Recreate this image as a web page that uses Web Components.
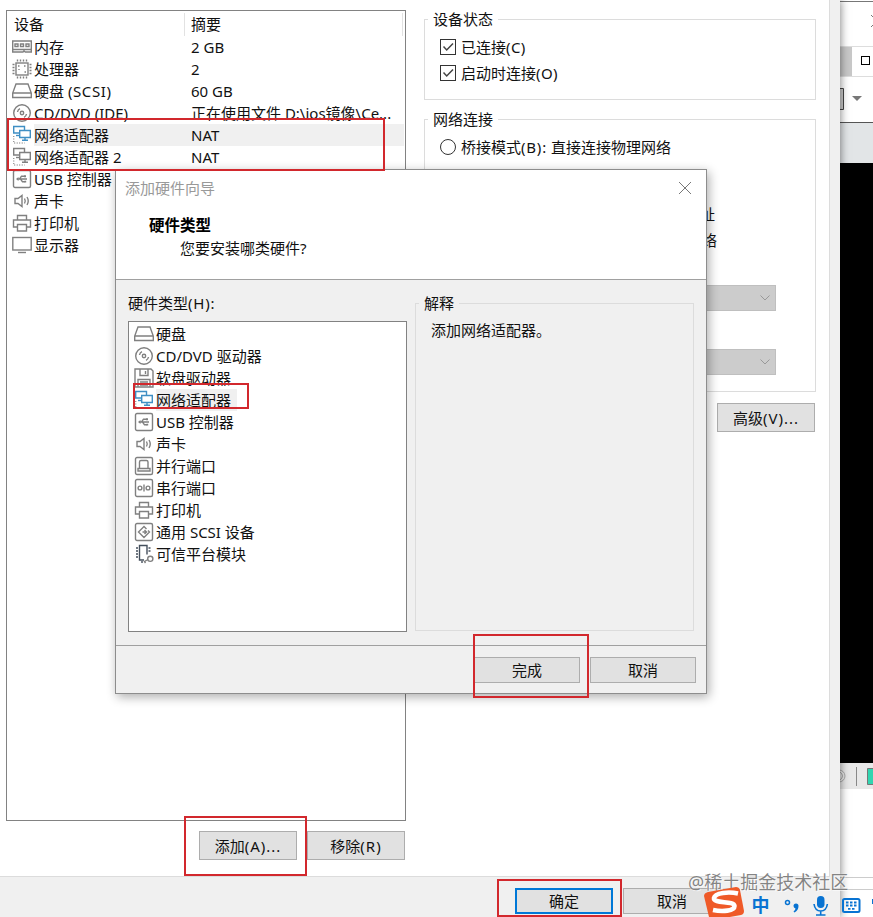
<!DOCTYPE html>
<html lang="zh-CN">
<head>
<meta charset="utf-8">
<title>虚拟机设置</title>
<style>
  html, body {
    margin: 0;
    width: 873px;
    height: 917px;
    overflow: hidden;
    background: #fff;
  }
  body {
    font-family: "Noto Sans", "Noto Sans CJK SC", sans-serif;
    font-size: 15px;
    line-height: 22px;
    color: #111;
  }
</style>
</head>
<body>
<vm-desktop></vm-desktop>

<script>
const ICONS = {
  memory: `<path d="M.7 4h18.600v11h-6l-1.300-1-1 1H.7zM.7 12.500h18.600"/><path d="M3 7h3v2.500H3zM8.500 7h3v2.500h-3zM14 7h3v2.500h-3z"/>`,
  cpu: `<rect x="4" y="4" width="12" height="12"/><path d="M5.500.500v2M8.500.500v2M11.500.500v2M14.500.500v2M5.500 17.500v2M8.500 17.500v2M11.500 17.500v2M14.500 17.500v2M.5 5.500h2M.5 8.500h2M.5 11.500h2M.5 14.500h2M17.500 5.500h2M17.500 8.500h2M17.500 11.500h2M17.500 14.500h2M6 7h1.500M12 7h1.500M12.500 13h1.500M7 10v1"/>`,
  disk: `<path d="M4 3h12l3.300 9v4.500H.7V12zM.7 12h18.600"/>`,
  cd: `<circle cx="10" cy="10" r="8.300"/><circle cx="10" cy="10" r="1.700"/><path d="M5.500 9a4.500 4.500 0 0 1 2.500-3.300M14.500 11a4.500 4.500 0 0 1-2.500 3.300"/>`,
  floppy: `<path d="M1 1h16l2 2v16H1zM6 1v6.500h8V1M11.500 3v3M4 19v-7.500h12V19M6 14h8M6 17h8"/>`,
  net: `<path d="M7.500 8H1.700V1.500h10.800v3.500"/><path d="M4 10.500h3.500"/><path d="M7.700 5.500h10.600v7H7.700zM13 12.500v2.500M10 15.200h6"/><path stroke="#999" stroke-dasharray="1 1.500" d="M1.700 11v7h11"/>`,
  usb: `<rect x="1.500" y="1.500" width="17" height="17" rx="1.500"/><path d="M5 10h10M7.500 10l2-2.800h3M8.500 10l2 2.800h2.500"/><path d="M6.500 8L4 10l2.500 2z" fill="#808080" stroke="none"/><path d="M12 6.200h2v2h-2zM12.500 11.800h1.700v1.700h-1.700z" fill="#808080" stroke="none"/>`,
  sound: `<path d="M3 7.500h3l4-3v11l-4-3H3zM12.500 7.500q1.500 2.500 0 5M15 6q2.500 4 0 8"/>`,
  printer: `<path d="M5.500 7V2.500h9V7M5.500 14h-4V7h17v7h-4M5.500 11.500h9V18h-9z"/>`,
  display: `<rect x=".8" y="2.500" width="18.400" height="12.500"/><path d="M6 17.500h8"/>`,
  parallel: `<rect x="1.500" y="1.500" width="17" height="17" rx="1.500"/><path d="M5.500 12.500V6q0-1.500 1.500-1.500h5.500q1.500 0 1.500 1.500v6.500M4 12.500h12v2.500H4z"/>`,
  serial: `<rect x="1.500" y="1.500" width="17" height="17" rx="1.500"/><circle cx="6" cy="10" r="1.900"/><circle cx="14" cy="10" r="1.900"/><path d="M10 6.500v7"/>`,
  scsi: `<rect x="1.500" y="1.500" width="17" height="17" rx="1.500"/><path d="M12.500 7L10 4.500 4.500 10l5.500 5.500 5.500-5.500-1.500-1.500M8.500 10h3.500M10.500 8l2 2-2 2"/>`,
  tpm: `<path d="M13 10.500V1.500H5.500V16H10M2 4h2M2 7h2M2 10h2M2 13h2M14.500 4h2M14.500 7h2M8 17v2" stroke="#444f5c"/><path d="M14 15.500l-3.500 2 1 1.500" /><circle cx="16.300" cy="14.800" r="2.600"/>`
};

const make = (tag, html) => {
  const template = document.createElement("template");
  template.innerHTML = html;
  window.customElements.define(tag, class extends HTMLElement {
    constructor() {
      super();
      this.attachShadow({ mode: "open" });
      this.shadowRoot.appendChild(template.content.cloneNode(true));
    }
  });
};

class DeviceIcon extends HTMLElement {
  connectedCallback() {
    if (!this.shadowRoot) this.attachShadow({ mode: "open" });
    const color = this.hasAttribute("active") ? "#3f8fc4" : "#808080";
    this.shadowRoot.innerHTML = `
      <style>
        :host { display: block; width: 20px; height: 20px; }
        svg { display: block; }
      </style>
      <svg width="20" height="20" viewBox="0 0 20 20" fill="none" stroke="${color}" stroke-width="1.400">
        ${ICONS[this.getAttribute("name")]}
      </svg>`;
  }
}
window.customElements.define("device-icon", DeviceIcon);

class DeviceRow extends HTMLElement {
  connectedCallback() {
    if (!this.shadowRoot) this.attachShadow({ mode: "open" });
    const active = this.hasAttribute("active") ? "active" : "";
    this.shadowRoot.innerHTML = `
      <style>
        :host { display: flex; height: 22px; align-items: center; white-space: nowrap; }
        device-icon { flex: none; margin-right: 2px; }
        .text { display: flex; height: 22px; line-height: 22px; }
        :host([selected]) .text { background: #f0f0f0; }
        .name { width: var(--name-width, auto); box-sizing: border-box; }
      </style>
      <device-icon name="${this.getAttribute("icon")}" ${active}></device-icon>
      <div class="text"><span class="name"><slot></slot></span><slot name="summary"></slot></div>`;
  }
}
window.customElements.define("device-row", DeviceRow);

make("push-button", `
  <style>
    :host {
      display: flex;
      box-sizing: border-box;
      align-items: center;
      justify-content: center;
      flex: none;
      background: #e1e1e1;
      border: 1px solid #adadad;
      white-space: nowrap;
    }
    :host([primary]) { border: 2px solid #0078d7; }
    ::slotted(span) { letter-spacing: 1px; }
  </style>
  <slot></slot>
`);

make("group-box", `
  <style>
    :host { display: block; box-sizing: border-box; border: 1px solid #dcdcdc; flex: none; }
    .legend {
      display: table;
      margin: -12px 0 0 3px;
      padding: 0 5px;
      height: 22px;
      background: var(--group-bg, #fff);
    }
  </style>
  <div class="legend"><slot name="legend"></slot></div>
  <slot></slot>
`);

make("check-item", `
  <style>
    :host { display: flex; align-items: center; height: 26px; white-space: nowrap; }
    .box {
      box-sizing: border-box;
      width: 16px;
      height: 16px;
      margin-right: 5px;
      border: 1px solid #333;
      background: #fff;
    }
    :host([radio]) .box { border-radius: 50%; }
    :host([radio]) svg { display: none; }
    svg { display: block; }
    ::slotted(span) { letter-spacing: .4px; }
  </style>
  <div class="box"><svg width="14" height="14" fill="none" stroke="#444" stroke-width="1.500"><path d="M2.500 6.500l3.200 3.500L12 3.500"/></svg></div>
  <slot></slot>
`);

make("combo-box", `
  <style>
    :host {
      display: flex;
      box-sizing: border-box;
      height: 26px;
      align-items: center;
      justify-content: flex-end;
      padding-right: 5px;
      background: #ccc;
      border: 1px solid #bfbfbf;
    }
  </style>
  <svg width="10" height="6" fill="none" stroke="#999"><path d="M.5.500l4.500 4.500L9.500.500"/></svg>
`);

make("device-list", `
  <style>
    :host {
      display: block;
      box-sizing: border-box;
      width: 400px;
      height: 811px;
      border: 1px solid #828282;
      --name-width: 157px;
    }
    .head { display: flex; height: 25px; padding-right: 2px; }
    .head div { box-sizing: border-box; border-right: 1px solid #e2e2e2; margin-top: 2px; height: 23px; line-height: 22px; }
    .head .a { width: 178px; padding-left: 7px; }
    .head .b { flex: 1; padding-left: 6px; }
    .rows { padding-left: 5px; }
    .fill { display: inline-block; width: 213px; }
    .wide { letter-spacing: .6px; }
  </style>
  <div class="head"><div class="a">设备</div><div class="b">摘要</div></div>
  <div class="rows">
    <device-row icon="memory">内存<span slot="summary">2 GB</span></device-row>
    <device-row icon="cpu">处理器<span slot="summary">2</span></device-row>
    <device-row icon="disk">硬盘 <span class="wide">(SCSI)</span><span slot="summary">60 GB</span></device-row>
    <device-row icon="cd">CD/DVD (IDE)<span slot="summary">正在使用文件 D:\\ios镜像\\Ce...</span></device-row>
    <device-row icon="net" active selected>网络适配器<span slot="summary" class="fill">NAT</span></device-row>
    <device-row icon="net">网络适配器 2<span slot="summary">NAT</span></device-row>
    <device-row icon="usb">USB 控制器</device-row>
    <device-row icon="sound">声卡</device-row>
    <device-row icon="printer">打印机</device-row>
    <device-row icon="display">显示器</device-row>
  </div>
`);

make("settings-window", `
  <style>
    :host {
      display: flex;
      flex-direction: column;
      position: relative;
      z-index: 1;
      width: 840px;
      height: 917px;
      background: #f0f0f0;
      box-shadow: 0 0 9px rgba(0, 0, 0, .55);
    }
    .page {
      display: flex;
      box-sizing: border-box;
      width: 830px;
      height: 877px;
      padding: 10px 0 0 6px;
      background: #fff;
      border-right: 1px solid #dcdcdc;
      border-bottom: 1px solid #dcdcdc;
    }
    .left { width: 400px; }
    .buttons { display: flex; justify-content: flex-end; gap: 10px; margin: 10px 1px 0 0; }
    .buttons push-button { width: 98px; height: 29px; }
    .right { width: 392px; margin: 9px 0 0 18px; }
    .state { height: 81px; }
    .net { height: 273px; margin-top: 19px; }
    .checks { padding: 4px 15px; }
    .tail { display: flex; flex-direction: column; align-items: flex-end; }
    .tail div { height: 26px; line-height: 26px; }
    .tail .ip { margin: 37px 100px 0 0; }
    .tail .host { margin-right: 98px; }
    combo-box { width: 300px; margin: 32px 39px 0 0; }
    combo-box + combo-box { margin-top: 38px; }
    .advanced { display: flex; justify-content: flex-end; gap: 10px; margin: 11px 1px 0 0; }
    .advanced push-button { width: 98px; height: 29px; }
    .footer { display: flex; gap: 10px; padding: 11px 0 0 515px; }
    .footer push-button { width: 98px; height: 26px; }
  </style>
  <div class="page">
    <div class="left">
      <device-list></device-list>
      <div class="buttons"><push-button>添加<span>(A)...</span></push-button><push-button>移除<span>(R)</span></push-button></div>
    </div>
    <div class="right">
      <group-box class="state">
        <span slot="legend">设备状态</span>
        <div class="checks"><check-item>已连接<span>(C)</span></check-item><check-item>启动时连接<span>(O)</span></check-item></div>
      </group-box>
      <group-box class="net">
        <span slot="legend">网络连接</span>
        <div class="checks"><check-item radio>桥接模式<span style="letter-spacing:.8px">(B):</span>&nbsp;直接连接物理网络</check-item></div>
        <div class="tail">
          <div class="ip">址</div>
          <div class="host">络</div>
          <combo-box></combo-box>
          <combo-box></combo-box>
        </div>
      </group-box>
      <div class="advanced"><push-button></push-button><push-button>高级<span>(V)...</span></push-button></div>
    </div>
  </div>
  <div class="footer"><push-button primary>确定</push-button><push-button>取消</push-button></div>
`);

make("hardware-wizard", `
  <style>
    :host {
      display: block;
      box-sizing: border-box;
      width: 592px;
      height: 525px;
      background: #f0f0f0;
      border: 1px solid #8d8d8d;
      box-shadow: 2px 3px 10px rgba(0, 0, 0, .32);
    }
    .header { height: 109px; background: #fff; border-bottom: 1px solid #a0a0a0; }
    .title { display: flex; justify-content: space-between; align-items: center; height: 35px; padding: 0 15px 0 9px; color: #999; }
    .header b { display: block; padding: 9px 0 0 33px; font-size: 15.5px; line-height: 23px; color: #000; }
    .header p { margin: 0; padding-left: 64px; line-height: 22px; }
    .body { display: flex; gap: 8px; padding: 0 12px; height: 366px; border-bottom: 1px solid #a0a0a0; box-sizing: border-box; }
    .label { padding: 12px 0 7px; }
    .label span { letter-spacing: .8px; }
    .list { box-sizing: border-box; width: 279px; height: 311px; padding: 1px 5px; background: #fff; border: 1px solid #828282; }
    device-row[selected] { --name-width: 81px; }
    group-box { width: 279px; height: 328px; margin-top: 23px; --group-bg: #f0f0f0; }
    .explain { padding: 5px 15px; }
    .footer { display: flex; justify-content: flex-end; gap: 10px; padding: 11px 10px 0; }
    .footer push-button { width: 106px; height: 26px; }
  </style>
  <div class="header">
    <div class="title"><span>添加硬件向导</span>
      <svg width="12" height="12" stroke="#777"><path d="M0 0l12 12M12 0L0 12"/></svg>
    </div>
    <b>硬件类型</b>
    <p>您要安装哪类硬件?</p>
  </div>
  <div class="body">
    <div>
      <div class="label">硬件类型<span>(H):</span></div>
      <div class="list">
        <device-row icon="disk">硬盘</device-row>
        <device-row icon="cd">CD/DVD 驱动器</device-row>
        <device-row icon="floppy">软盘驱动器</device-row>
        <device-row icon="net" active selected>网络适配器</device-row>
        <device-row icon="usb">USB 控制器</device-row>
        <device-row icon="sound">声卡</device-row>
        <device-row icon="parallel">并行端口</device-row>
        <device-row icon="serial">串行端口</device-row>
        <device-row icon="printer">打印机</device-row>
        <device-row icon="scsi">通用 SCSI 设备</device-row>
        <device-row icon="tpm">可信平台模块</device-row>
      </div>
    </div>
    <group-box><span slot="legend">解释</span><div class="explain">添加网络适配器。</div></group-box>
  </div>
  <div class="footer"><push-button>完成</push-button><push-button>取消</push-button></div>
`);

// The slice of the window that shows behind the settings dialog
make("console-window", `
  <style>
    :host { display: flex; flex-direction: column; width: 33px; height: 917px; overflow: hidden; background: #fff; }
    div { box-sizing: border-box; flex: none; }
    .title { height: 45px; border-top: 1px solid #777; margin-top: 1px; padding: 12px 0 0 31px; }
    .tab { height: 31px; display: flex; border: solid #ddd; border-width: 1px 0; }
    .tab i { width: 12px; background: #c8c8c8; }
    .tab b { width: 9px; height: 9px; box-sizing: border-box; margin: 9px 0 0 9px; border: 1px solid #000; }
    .tools { height: 46px; padding-top: 10px; border-bottom: 1px solid #555; }
    .bar { height: 40px; background: #e2e5e7; }
    .screen { height: 600px; background: #000; }
    .status { display: flex; height: 26px; background: #e8e8e8; }
    .task { height: 13px; margin-top: 88px; border: solid #ccc; border-width: 1px 0; }
    svg { display: block; }
  </style>
  <div class="title"><svg width="12" height="14" stroke="#777"><path d="M0 1l12 12M12 1L0 13"/></svg></div>
  <div class="tab"><i></i><b></b></div>
  <div class="tools"><svg width="33" height="24"><path d="M-2 1.500H3.500v21H-2" fill="#ccc" stroke="#444"/><path d="M12 9h10l-5 5z" fill="#777"/></svg></div>
  <div class="bar"></div>
  <div class="screen"></div>
  <div class="status"><svg width="33" height="26" fill="none" stroke="#aaa"><circle cx="-1" cy="13" r="6"/><path d="M0 9q5 4 0 8"/><path d="M16.500 4v19" stroke="#888"/><path d="M27.500 5.500h9v16h-9z" fill="#31d5b0" stroke="#777"/></svg></div>
  <div class="task"></div>
`);

make("ime-bar", `
  <style>
    :host { display: block; }
    svg { display: block; font-family: "Liberation Sans", "Noto Sans CJK SC", sans-serif; }
  </style>
  <svg width="169" height="32" viewBox="704 885 169 32">
    <path d="M708 892l28-5q3 0 4 3l4 21q0 3-3 4l-28 5q-3 0-4-3l-5-21q0-3 4-4z" fill="#ef5a28"/>
    <path d="M738 893.500c-9-2-23-1-24 4.500-1 6 20 2.500 20.500 8 0 5-12 6-21.500 4" fill="none" stroke="#fff" stroke-width="4.600"/>
    <text x="751.500" y="912" font-size="18" font-weight="700" fill="#0873d2">中</text>
    <circle cx="787.500" cy="902.500" r="2" fill="none" stroke="#0873d2" stroke-width="1.500"/>
    <path d="M793.500 906a2.500 2.500 0 0 1 5 0q0 4-4 6.500l-1-1q2-1.500 2-3-2-1-2-2.500z" fill="#0873d2"/>
    <rect x="817" y="896" width="7.500" height="12" rx="3.700" fill="#0873d2"/>
    <path d="M814 904q1 7 6.700 7t6.700-7M820.700 911v4M816 915h9.500" fill="none" stroke="#0873d2" stroke-width="1.600"/>
    <rect x="843" y="899" width="16.500" height="13" rx="1.500" fill="none" stroke="#0873d2" stroke-width="2"/>
    <path d="M846 902.500h11M846 905.500h11M848 908.800h7" stroke="#0873d2" stroke-width="1.800" stroke-dasharray="2.500 1.500"/>
    <path d="M872 899h3v5h-3z" fill="#0873d2"/>
  </svg>
`);

make("vm-desktop", `
  <style>
    :host { display: flex; position: relative; width: 873px; height: 917px; overflow: hidden; }
    hardware-wizard { position: absolute; left: 115px; top: 169px; z-index: 2; }
    .mark { position: absolute; z-index: 3; box-sizing: border-box; border: 2px solid #d2282d; }
    ime-bar { position: absolute; left: 704px; top: 885px; z-index: 5; }
    .watermark {
      position: absolute;
      left: 688px;
      top: 869px;
      z-index: 4;
      font-size: 18px;
      line-height: 26px;
      white-space: nowrap;
      color: rgba(110, 110, 110, .85);
      text-shadow: 0 0 1px #fff, 1px 1px 0 rgba(255, 255, 255, .6);
    }
  </style>
  <settings-window></settings-window>
  <console-window></console-window>
  <hardware-wizard></hardware-wizard>
  <div class="mark" style="left:7px;top:118px;width:378px;height:53px"></div>
  <div class="mark" style="left:133px;top:383px;width:116px;height:26px"></div>
  <div class="mark" style="left:473px;top:634px;width:116px;height:64px"></div>
  <div class="mark" style="left:184px;top:816px;width:123px;height:60px"></div>
  <div class="mark" style="left:497px;top:879px;width:125px;height:38px"></div>
  <div class="watermark">@稀土掘金技术社区</div>
  <ime-bar></ime-bar>
`);
</script>
</body>
</html>
